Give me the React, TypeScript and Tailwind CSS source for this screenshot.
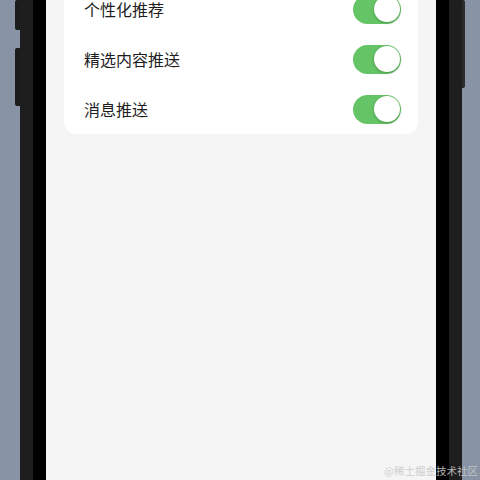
import React from "react";

const rows = ["个性化推荐", "精选内容推送", "消息推送"];

function Toggle() {
  return (
    <div className="flex h-[29px] w-[48px] items-center justify-end rounded-full bg-[#65c466] p-[1.5px]">
      <div className="h-[26px] w-[26px] rounded-full bg-white shadow-[0_1px_3px_rgba(0,0,0,0.25)]" />
    </div>
  );
}

export default function App() {
  return (
    <div
      className="relative flex h-[480px] w-[480px] overflow-hidden bg-[#8894a6] pl-[20px]"
      style={{ fontFamily: '"Noto Sans CJK SC", "Noto Sans", sans-serif' }}
    >
      {/* side buttons */}
      <div className="absolute left-[15px] top-0 h-[30px] w-[5px] rounded-l-[2px] bg-[#1c1c1c]" />
      <div className="absolute left-[15px] top-[48px] h-[58px] w-[5px] rounded-l-[2px] bg-[#1c1c1c]" />
      <div className="absolute left-[462px] top-0 h-[88px] w-[3px] rounded-r-[2px] bg-[#2a2a2a]" />

      {/* phone frame */}
      <div className="flex h-full w-[442px] bg-[#1e1e1e] px-[13px]">
        <div className="flex flex-1 bg-black px-[13px]">
          <div className="flex flex-1 flex-col overflow-hidden bg-[#f5f5f5] px-[18px]">
            <div className="-mt-4 rounded-xl bg-white">
              {rows.map((label) => (
                <div
                  key={label}
                  className="flex h-[50px] items-center justify-between pl-[20px] pr-[17px]"
                >
                  <span className="text-[16px] text-[#1d1d1d]">{label}</span>
                  <Toggle />
                </div>
              ))}
            </div>
          </div>
        </div>
      </div>

      {/* watermark */}
      <div className="absolute bottom-[4px] right-[2px] text-[10.5px] leading-none text-[#c8c8c8]/90">
        @稀土掘金技术社区
      </div>
    </div>
  );
}
